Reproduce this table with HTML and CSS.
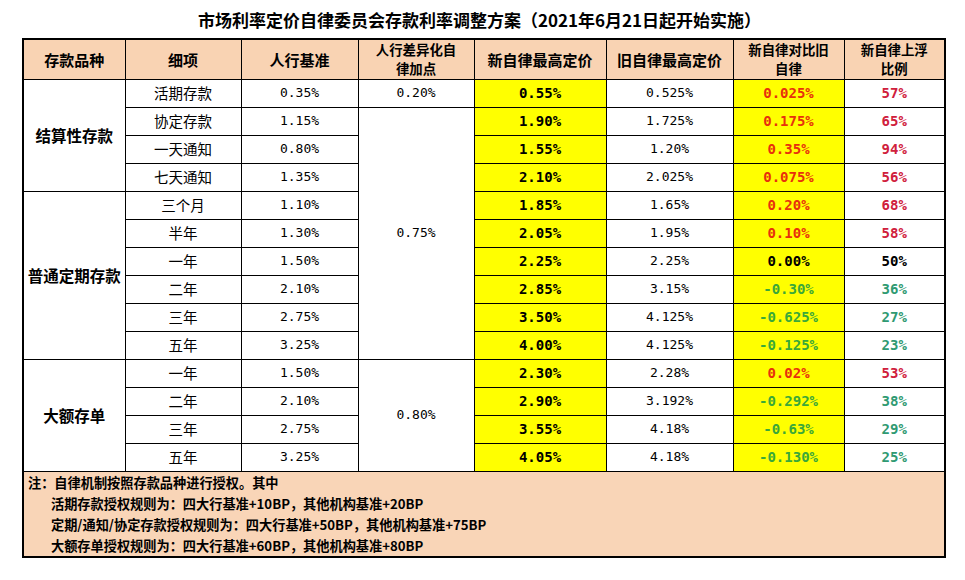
FILE: index.html
```html
<!DOCTYPE html>
<html lang="zh-CN">
<head>
<meta charset="utf-8">
<title>存款利率调整方案</title>
<link rel="stylesheet" href="styles.css">
</head>
<body>
<div class="page">
  <h1 class="title">市场利率定价自律委员会存款利率调整方案（2021年6月21日起开始实施）</h1>
  <table class="rates">
    <colgroup>
      <col class="c1"><col class="c2"><col class="c3"><col class="c4"><col class="c5"><col class="c6"><col class="c7"><col class="c8">
    </colgroup>
    <thead>
      <tr class="head">
        <th>存款品种</th>
        <th>细项</th>
        <th>人行基准</th>
        <th class="two"><span class="hl">人行差异化自</span><span class="hl">律加点</span></th>
        <th>新自律最高定价</th>
        <th>旧自律最高定价</th>
        <th class="two"><span class="hl">新自律对比旧</span><span class="hl">自律</span></th>
        <th class="two"><span class="hl">新自律上浮</span><span class="hl">比例</span></th>
      </tr>
    </thead>
    <tbody>
      <tr>
        <td rowspan="4" class="cat">结算性存款</td>
        <td class="item">活期存款</td><td class="num">0.35%</td><td class="num">0.20%</td>
        <td class="new">0.55%</td><td class="num">0.525%</td><td class="diff up">0.025%</td><td class="pct up">57%</td>
      </tr>
      <tr>
        <td class="item">协定存款</td><td class="num">1.15%</td><td rowspan="9" class="num">0.75%</td>
        <td class="new">1.90%</td><td class="num">1.725%</td><td class="diff up">0.175%</td><td class="pct up">65%</td>
      </tr>
      <tr>
        <td class="item">一天通知</td><td class="num">0.80%</td>
        <td class="new">1.55%</td><td class="num">1.20%</td><td class="diff up">0.35%</td><td class="pct up">94%</td>
      </tr>
      <tr>
        <td class="item">七天通知</td><td class="num">1.35%</td>
        <td class="new">2.10%</td><td class="num">2.025%</td><td class="diff up">0.075%</td><td class="pct up">56%</td>
      </tr>
      <tr>
        <td rowspan="6" class="cat">普通定期存款</td>
        <td class="item">三个月</td><td class="num">1.10%</td>
        <td class="new">1.85%</td><td class="num">1.65%</td><td class="diff up">0.20%</td><td class="pct up">68%</td>
      </tr>
      <tr>
        <td class="item">半年</td><td class="num">1.30%</td>
        <td class="new">2.05%</td><td class="num">1.95%</td><td class="diff up">0.10%</td><td class="pct up">58%</td>
      </tr>
      <tr>
        <td class="item">一年</td><td class="num">1.50%</td>
        <td class="new">2.25%</td><td class="num">2.25%</td><td class="diff">0.00%</td><td class="pct">50%</td>
      </tr>
      <tr>
        <td class="item">二年</td><td class="num">2.10%</td>
        <td class="new">2.85%</td><td class="num">3.15%</td><td class="diff down">-0.30%</td><td class="pct down">36%</td>
      </tr>
      <tr>
        <td class="item">三年</td><td class="num">2.75%</td>
        <td class="new">3.50%</td><td class="num">4.125%</td><td class="diff down">-0.625%</td><td class="pct down">27%</td>
      </tr>
      <tr>
        <td class="item">五年</td><td class="num">3.25%</td>
        <td class="new">4.00%</td><td class="num">4.125%</td><td class="diff down">-0.125%</td><td class="pct down">23%</td>
      </tr>
      <tr>
        <td rowspan="4" class="cat">大额存单</td>
        <td class="item">一年</td><td class="num">1.50%</td><td rowspan="4" class="num">0.80%</td>
        <td class="new">2.30%</td><td class="num">2.28%</td><td class="diff up">0.02%</td><td class="pct up">53%</td>
      </tr>
      <tr>
        <td class="item">二年</td><td class="num">2.10%</td>
        <td class="new">2.90%</td><td class="num">3.192%</td><td class="diff down">-0.292%</td><td class="pct down">38%</td>
      </tr>
      <tr>
        <td class="item">三年</td><td class="num">2.75%</td>
        <td class="new">3.55%</td><td class="num">4.18%</td><td class="diff down">-0.63%</td><td class="pct down">29%</td>
      </tr>
      <tr>
        <td class="item">五年</td><td class="num">3.25%</td>
        <td class="new">4.05%</td><td class="num">4.18%</td><td class="diff down">-0.130%</td><td class="pct down">25%</td>
      </tr>
    </tbody>
    <tfoot>
      <tr>
        <td colspan="8" class="note">
          <div class="note-line">注：自律机制按照存款品种进行授权。其中</div>
          <div class="note-line indent">活期存款授权规则为：四大行基准+10BP，其他机构基准+20BP</div>
          <div class="note-line indent">定期/通知/协定存款授权规则为：四大行基准+50BP，其他机构基准+75BP</div>
          <div class="note-line indent">大额存单授权规则为：四大行基准+60BP，其他机构基准+80BP</div>
        </td>
      </tr>
    </tfoot>
  </table>
</div>
</body>
</html>
```

FILE: styles.css
```css
html, body {
  margin: 0;
  padding: 0;
  background: #ffffff;
}

.page {
  width: 922px;
  margin-left: 22px;
  font-family: "Noto Sans CJK SC", "Noto Sans", sans-serif;
  color: #000;
}

.title {
  margin: 0;
  height: 38px;
  line-height: 40px;
  padding-right: 7px;
  font-size: 17px;
  font-weight: 700;
  text-align: center;
}

.rates {
  width: 922px;
  table-layout: fixed;
  border-collapse: collapse;
  border: 2px solid #000;
}

.c1 { width: 102px; }
.c2 { width: 116px; }
.c3 { width: 117px; }
.c4 { width: 116px; }
.c5 { width: 132px; }
.c6 { width: 127px; }
.c7 { width: 111px; }
.c8 { width: 101px; }

.rates th,
.rates td {
  border: 1px solid #000;
  padding: 0;
  text-align: center;
  vertical-align: middle;
}

.head {
  height: 38px;
}

.head th {
  background: #f9d3b3;
  font-size: 15px;
  font-weight: 700;
  line-height: 19px;
}

.head th.two {
  font-size: 13.4px;
}

.hl {
  display: block;
  height: 19.4px;
  line-height: 19.4px;
}

.rates tbody tr {
  height: 28px;
}

.cat {
  font-size: 15.5px;
  font-weight: 700;
}

.item {
  font-size: 14.5px;
  font-weight: 400;
  line-height: 20px;
}

.num {
  font-family: "DejaVu Sans Mono", "Liberation Mono", monospace;
  font-size: 13px;
  line-height: 20px;
}

.new,
.diff,
.pct {
  font-family: "DejaVu Sans Mono", "Liberation Mono", monospace;
  font-size: 14px;
  font-weight: 700;
  line-height: 20px;
}

.new,
.diff {
  background: #ffff00;
}

.diff.up { color: #e8300c; }
.diff.down { color: #3aa83a; }
.pct.up { color: #d0203c; }
.pct.down { color: #2f9a72; }

.rates td.note {
  background: #f9d5b7;
  text-align: left;
  padding: 0 0 0 4px;
  font-size: 13.2px;
  font-weight: 700;
  line-height: 21px;
}

.note-line.indent {
  padding-left: 23px;
}
```
